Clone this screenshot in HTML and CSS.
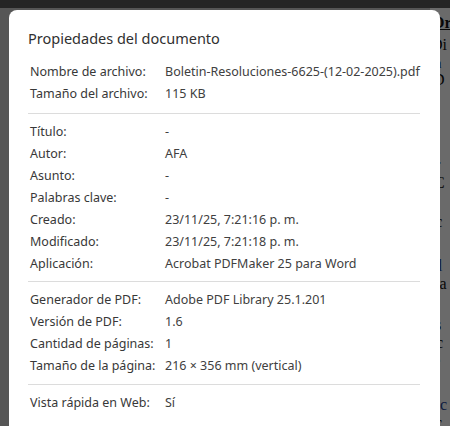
FILE: index.html
```html
<!DOCTYPE html>
<html lang="es">
<head>
<meta charset="utf-8">
<title>Propiedades del documento</title>
<link rel="stylesheet" href="styles.css">
</head>
<body>
<div class="viewer">
  <div class="topbar"></div>
  <div class="stage">
    <div class="page">
      <p class="d1"><u><b>Or</b></u></p>
      <p class="d2">Di</p>
      <p class="d3"><span class="blue">: n</span></p>
      <p class="d4">D</p>
      <p class="d5">er</p>
      <p class="d6">C</p>
      <p class="d7">n</p>
      <p class="d8">sc</p>
      <p class="d9"><span class="blue">pl</span></p>
      <p class="d10">cia</p>
      <p class="d11">es</p>
      <p class="d12">uc</p>
      <p class="d13">re</p>
      <p class="d14">u <span class="blue">c</span></p>
      <p class="d15">ac</p>
    </div>
  </div>
  <div class="overlay"></div>
</div>

<div class="dialog" role="dialog">
  <h1 class="title">Propiedades del documento</h1>
  <dl class="group">
    <div class="row"><dt>Nombre de archivo:</dt><dd>Boletin-Resoluciones-6625-(12-02-2025).pdf</dd></div>
    <div class="row"><dt>Tamaño del archivo:</dt><dd>115 KB</dd></div>
  </dl>
  <dl class="group">
    <div class="row"><dt>Título:</dt><dd>-</dd></div>
    <div class="row"><dt>Autor:</dt><dd>AFA</dd></div>
    <div class="row"><dt>Asunto:</dt><dd>-</dd></div>
    <div class="row"><dt>Palabras clave:</dt><dd>-</dd></div>
    <div class="row"><dt>Creado:</dt><dd>23/11/25, 7:21:16 p. m.</dd></div>
    <div class="row"><dt>Modificado:</dt><dd>23/11/25, 7:21:18 p. m.</dd></div>
    <div class="row"><dt>Aplicación:</dt><dd>Acrobat PDFMaker 25 para Word</dd></div>
  </dl>
  <dl class="group">
    <div class="row"><dt>Generador de PDF:</dt><dd>Adobe PDF Library 25.1.201</dd></div>
    <div class="row"><dt>Versión de PDF:</dt><dd>1.6</dd></div>
    <div class="row"><dt>Cantidad de páginas:</dt><dd>1</dd></div>
    <div class="row"><dt>Tamaño de la página:</dt><dd>216 × 356 mm (vertical)</dd></div>
  </dl>
  <dl class="group">
    <div class="row"><dt>Vista rápida en Web:</dt><dd>Sí</dd></div>
  </dl>
</div>
</body>
</html>
```
FILE: styles.css
```css
html, body {
  margin: 0;
  padding: 0;
  width: 450px;
  height: 426px;
  overflow: hidden;
}
body {
  font-family: "Noto Sans", "Open Sans", sans-serif;
  background: #525252;
}
.viewer {
  position: relative;
  width: 450px;
  height: 426px;
  display: flex;
  flex-direction: column;
}
.topbar {
  height: 8px;
  background: #555;
}
.stage {
  flex: 1;
  display: flex;
  justify-content: flex-end;
  background: #c4c4c4;
}
.page {
  width: 20px;
  background: #f2f2f2;
  font-family: "Liberation Serif", serif;
  font-size: 16px;
  color: #111;
  overflow: hidden;
  position: relative;
}
.page p {
  position: absolute;
  margin: 0;
  line-height: 18px;
  white-space: nowrap;
}
.blue { color: #1f3f8f; }
.d1 { top: 6px; left: 2px; }
.d2 { top: 28px; left: 1px; }
.d3 { top: 47px; left: -3px; font-size: 14px; }
.d4 { top: 63px; left: 3px; }
.d5 { top: 148px; left: -2px; }
.d6 { top: 166px; left: 4px; }
.d7 { top: 188px; left: 0px; }
.d8 { top: 205px; left: -1px; }
.d9 { top: 249px; left: 0px; }
.d10 { top: 267px; left: -2px; }
.d11 { top: 308px; left: -2px; }
.d12 { top: 326px; left: -2px; }
.d13 { top: 344px; left: -2px; }
.d14 { top: 388px; left: -2px; }
.d15 { top: 406px; left: -2px; }
.overlay {
  position: absolute;
  inset: 0;
  background: rgba(0, 0, 0, 0.56);
}

.dialog {
  position: absolute;
  left: 9px;
  top: 10px;
  width: 431px;
  height: 440px;
  box-sizing: border-box;
  background: #fff;
  border-radius: 8px;
  padding: 17px 20px 0 19px;
  color: #333;
}
.title {
  margin: 0 0 12px;
  font-size: 14.5px;
  font-weight: 400;
  line-height: 22px;
  color: #303030;
}
.group {
  margin: 0;
  padding: 7px 0;
  border-bottom: 1px solid #dcdcdc;
}
.group:first-of-type { padding-top: 0; padding-bottom: 8px; }
.group:last-of-type { border-bottom: none; }
.row {
  display: flex;
  height: 21.9px;
  align-items: center;
  font-size: 12.5px;
  padding-left: 2px;
}
.row dt {
  width: 135px;
  flex: none;
  color: #383838;
}
.row dd {
  margin: 0;
  color: #404040;
  white-space: nowrap;
}
```
